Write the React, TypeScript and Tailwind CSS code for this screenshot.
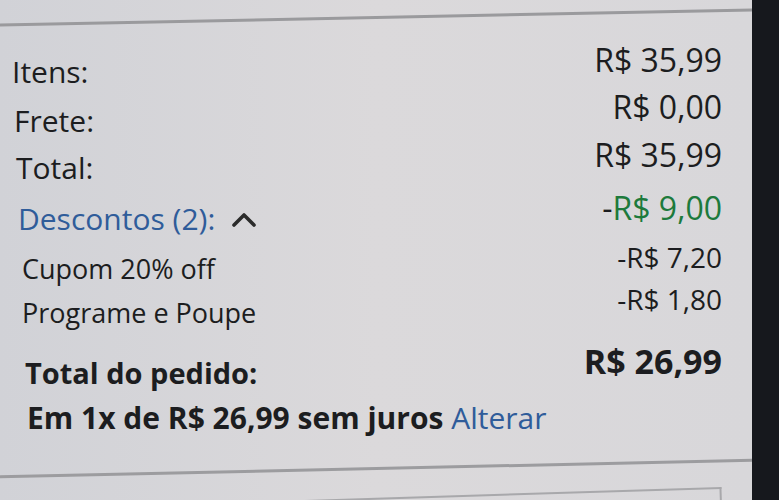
import React from 'react'

const font = { fontFamily: '"Open Sans", "Noto Sans", sans-serif' }

interface RowProps {
  label: React.ReactNode
  value: React.ReactNode
  className?: string
  labelClassName?: string
  valueClassName?: string
}

function Row({ label, value, className = '', labelClassName = '', valueClassName = '' }: RowProps) {
  return (
    <div className={`flex flex-row items-start justify-between pr-[30px] ${className}`}>
      <span className={labelClassName}>{label}</span>
      <span className={valueClassName}>{value}</span>
    </div>
  )
}

function ChevronUp() {
  return (
    <svg className="inline-block ml-[16px] -mt-[6px]" width="26" height="16" viewBox="0 0 26 16">
      <path d="M3 14 L13 4 L23 14" fill="none" stroke="#2b2b2b" strokeWidth="3.6" strokeLinecap="round" strokeLinejoin="round" />
    </svg>
  )
}

export default function App() {
  return (
    <div className="flex flex-row w-[779px] h-[500px] overflow-hidden bg-[#1a1c21]" style={font}>
      <div className="relative flex flex-col w-[752px] h-full bg-gradient-to-r from-[#d1d2d7] via-[#dbd9db] to-[#d8d7da] text-[#1c1d20] overflow-hidden">
        <div className="h-[16px] shrink-0" />
        <div className="h-[3px] shrink-0 w-[760px] -ml-[4px] bg-[#9a9a9d] -rotate-[1.15deg]" />
        <div className="h-[23px] shrink-0" />

        <Row
          className="h-[47px] shrink-0 pl-[12px] text-[30px] leading-[36px]"
          label="Itens:"
          labelClassName="mt-[12px]"
          value="R$ 35,99"
          valueClassName="text-[32px]"
        />
        <Row
          className="h-[48px] shrink-0 pl-[14px] text-[30px] leading-[36px]"
          label="Frete:"
          labelClassName="mt-[14px]"
          value="R$ 0,00"
          valueClassName="text-[32px]"
        />
        <Row
          className="h-[53px] shrink-0 pl-[16px] text-[30px] leading-[36px]"
          label="Total:"
          labelClassName="mt-[13px]"
          value="R$ 35,99"
          valueClassName="text-[32px]"
        />
        <Row
          className="h-[51px] shrink-0 pl-[18px] text-[30px] leading-[36px]"
          label={
            <span className="text-[#2f5c9a]">
              Descontos (2):
              <ChevronUp />
            </span>
          }
          labelClassName="mt-[11px]"
          value={
            <>
              -<span className="text-[#1d7a3c]">R$ 9,00</span>
            </>
          }
          valueClassName="text-[32px]"
        />
        <Row
          className="h-[42px] shrink-0 pl-[22px] text-[27px] leading-[32px]"
          label="Cupom 20% off"
          labelClassName="mt-[12px]"
          value="-R$ 7,20"
          valueClassName="text-[28px]"
        />
        <Row
          className="h-[60px] shrink-0 pl-[22px] text-[27px] leading-[32px]"
          label="Programe e Poupe"
          labelClassName="mt-[14px]"
          value="-R$ 1,80"
          valueClassName="text-[28px]"
        />
        <Row
          className="h-[57px] shrink-0 pl-[25px] text-[29px] leading-[36px] font-bold"
          label="Total do pedido:"
          labelClassName="mt-[12px]"
          value="R$ 26,99"
          valueClassName="text-[34px]"
        />
        <div className="shrink-0 pl-[27px] text-[30px] leading-[36px] whitespace-nowrap">
          <span className="font-bold">Em 1x de R$ 26,99 sem juros</span>{' '}
          <span className="text-[#2f5c9a]">Alterar</span>
        </div>

        <div className="h-[31px] shrink-0" />
        <div className="h-[3px] shrink-0 w-[770px] -ml-[8px] bg-[#9c9c9f] -rotate-[1.25deg]" />
        <div className="h-[24px] shrink-0" />
        <div className="shrink-0 ml-[270px] mr-[30px] h-[30px] border-t-2 border-r-2 border-[#a8a8ab] -rotate-[1.8deg]" />
      </div>
      <div className="flex-1 bg-[#16181d]" />
    </div>
  )
}
